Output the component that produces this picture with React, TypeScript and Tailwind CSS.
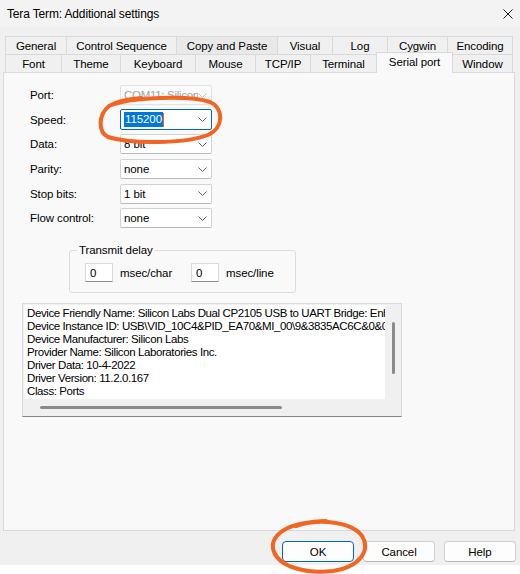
import React from "react";

const tabsRow1: [string, number][] = [
  ["General", 61],
  ["Control Sequence", 110],
  ["Copy and Paste", 101],
  ["Visual", 55],
  ["Log", 55],
  ["Cygwin", 60],
  ["Encoding", 66],
];

const tabsRow2: [string, number][] = [
  ["Font", 56],
  ["Theme", 59],
  ["Keyboard", 75],
  ["Mouse", 60],
  ["TCP/IP", 55],
  ["Terminal", 66],
  ["Serial port", 77],
  ["Window", 60],
];

function Chevron({ color = "#5f5f5f" }: { color?: string }) {
  return (
    <svg width="9" height="5" viewBox="0 0 9 5" className="shrink-0">
      <polyline points="0.5,0.5 4.5,4.5 8.5,0.5" fill="none" stroke={color} strokeWidth="1" />
    </svg>
  );
}

function Select({ value }: { value: string }) {
  return (
    <div className="w-[92px] h-[20px] bg-white border border-[#d3d3d3] border-b-[#b8b8b8] rounded-[2px] flex items-center pl-[3px] pr-[4px]">
      <span className="flex-1 whitespace-nowrap overflow-hidden">{value}</span>
      <Chevron />
    </div>
  );
}

const info = [
  "Device Friendly Name: Silicon Labs Dual CP2105 USB to UART Bridge: Enhanced COM Port (COM11)",
  "Device Instance ID: USB\\VID_10C4&PID_EA70&MI_00\\9&3835AC6C&0&0000",
  "Device Manufacturer: Silicon Labs",
  "Provider Name: Silicon Laboratories Inc.",
  "Driver Data: 10-4-2022",
  "Driver Version: 11.2.0.167",
  "Class: Ports",
];

export default function App() {
  return (
    <div className="relative w-[520px] h-[574px] bg-white overflow-hidden font-['Liberation_Sans',Arial,sans-serif] text-[11.5px] leading-[14px] tracking-[-0.1px] text-black">
      <div className="h-[565px] bg-[#f0f0f0] flex flex-col">
        {/* Title bar */}
        <div className="h-[27px] flex items-center justify-between pl-[7px] pr-[7px] bg-[#f3f3f3]">
          <span className="text-[12px] tracking-[-0.15px]">Tera Term: Additional settings</span>
          <svg width="10" height="10" viewBox="0 0 10 10">
            <line x1="0.5" y1="0.5" x2="9.5" y2="9.5" stroke="#1b1b1b" strokeWidth="1" />
            <line x1="9.5" y1="0.5" x2="0.5" y2="9.5" stroke="#1b1b1b" strokeWidth="1" />
          </svg>
        </div>

        {/* Tabs */}
        <div className="mt-[9px] pl-[5px]">
          <div className="flex h-[18px]">
            {tabsRow1.map(([label, w], i) => (
              <div
                key={label}
                style={{ width: w }}
                className={
                  "h-[18px] flex items-center justify-center border-t border-l border-[#d9d9d9] " +
                  (i === tabsRow1.length - 1 ? "border-r " : "") +
                  (label === "Copy and Paste" ? "bg-[#e9e9e9]" : "bg-[#f0f0f0]")
                }
              >
                {label}
              </div>
            ))}
          </div>
          <div className="flex h-[20px] -mt-[2px] items-end relative z-10">
            {tabsRow2.map(([label, w], i) => {
              const sel = label === "Serial port";
              return (
                <div
                  key={label}
                  style={{ width: w }}
                  className={
                    sel
                      ? "h-[21px] -mb-px flex items-start justify-center pt-[2px] bg-[#f9f9f9] border-t border-l border-r border-[#d9d9d9]"
                      : "h-[18px] flex items-center justify-center bg-[#f0f0f0] border-t border-[#d9d9d9] " +
                        (i === tabsRow2.length - 1 ? "border-r " : "") +
                        (label !== "Window" ? "border-l" : "")
                  }
                >
                  {label}
                </div>
              );
            })}
          </div>
        </div>

        {/* Panel */}
        <div className="ml-[3px] w-[512px] h-[459px] border border-[#d9d9d9] bg-[#f9f9f9] flex flex-col">
          {/* Form rows */}
          <div className="mt-[12px] pl-[26px] flex flex-col gap-[4.7px]">
            <div className="flex items-center h-[20px]">
              <span className="w-[90px]">Port:</span>
              <div className="w-[92px] h-[20px] bg-[#fbfbfb] border border-[#e2e2e2] rounded-[2px] flex items-center pl-[3px] pr-[4px] text-[#a3a3a3]">
                <span className="flex-1 whitespace-nowrap overflow-hidden tracking-[-0.3px]">COM11: Silicon</span>
                <Chevron color="#c4c4c4" />
              </div>
            </div>
            <div className="flex items-center h-[20px]">
              <span className="w-[90px]">Speed:</span>
              <div className="w-[92px] h-[21px] bg-white border border-[#0067c0] rounded-[2px] flex items-center pl-[3px] pr-[4px]">
                <span className="flex-1 flex items-center">
                  <span className="bg-[#0078d7] text-white px-[1px] leading-[15px]">115200</span>
                  <span className="w-[1px] h-[14px] bg-[#f26522]" />
                </span>
                <Chevron />
              </div>
            </div>
            <div className="flex items-center h-[20px]">
              <span className="w-[90px]">Data:</span>
              <Select value="8 bit" />
            </div>
            <div className="flex items-center h-[20px]">
              <span className="w-[90px]">Parity:</span>
              <Select value="none" />
            </div>
            <div className="flex items-center h-[20px]">
              <span className="w-[90px]">Stop bits:</span>
              <Select value="1 bit" />
            </div>
            <div className="flex items-center h-[20px]">
              <span className="w-[90px]">Flow control:</span>
              <Select value="none" />
            </div>
          </div>

          {/* Transmit delay */}
          <fieldset className="ml-[65px] mt-[15px] w-[227px] border border-[#dcdcdc] rounded-[3px] pb-[10px]">
            <legend className="ml-[7px] px-[2px] leading-[14px]">Transmit delay</legend>
            <div className="flex items-center mt-[6px] pl-[15px]">
              <div className="w-[28px] h-[19px] bg-white border border-[#dadada] border-b-[#8d8d8d] pl-[4px] flex items-center">0</div>
              <span className="w-[78px] pl-[7px]">msec/char</span>
              <div className="w-[28px] h-[19px] bg-white border border-[#dadada] border-b-[#8d8d8d] pl-[4px] flex items-center">0</div>
              <span className="pl-[7px]">msec/line</span>
            </div>
          </fieldset>

          {/* Info list */}
          <div className="ml-[18px] mt-[10px] w-[380px] h-[114px] border border-[#dadada] border-b-[#848484] bg-[#f0f0f0] p-[1px] flex flex-col">
            <div className="flex h-[94px]">
              <div className="w-[361px] h-[94px] bg-white overflow-hidden pl-[3px] pt-[2px] tracking-[-0.4px]">
                {info.map((l) => (
                  <div key={l} className="whitespace-nowrap leading-[13px]">
                    {l}
                  </div>
                ))}
              </div>
              <div className="flex-1 flex justify-center pt-[17px]">
                <div className="w-[3px] h-[52px] rounded-full bg-[#8a8a8a] ml-[1px]" />
              </div>
            </div>
            <div className="flex-1 flex items-center pl-[16px]">
              <div className="w-[242px] h-[3px] rounded-full bg-[#8a8a8a]" />
            </div>
          </div>
        </div>

        {/* Buttons */}
        <div className="mt-[10px] flex justify-end gap-[9px] pr-[4px]">
          <button className="w-[72px] h-[21px] bg-[#fdfdfd] border border-[#0067c0] rounded-[4px] flex items-center justify-center">
            OK
          </button>
          <button className="w-[72px] h-[21px] bg-[#fdfdfd] border border-[#d0d0d0] border-b-[#b5b5b5] rounded-[4px] flex items-center justify-center">
            Cancel
          </button>
          <button className="w-[72px] h-[21px] bg-[#fdfdfd] border border-[#d0d0d0] border-b-[#b5b5b5] rounded-[4px] flex items-center justify-center">
            Help
          </button>
        </div>
      </div>

      {/* Orange annotations */}
      <svg className="absolute inset-0 pointer-events-none" width="520" height="574" viewBox="0 0 520 574">
        <path
          d="M 109 106 C 129 97, 190 95, 210 102 C 224 108, 224 128, 208 135 C 184 144, 130 144, 108 137 C 98 132, 98 115, 109 106 C 117 101, 129 99, 141 98"
          fill="none"
          stroke="#f26522"
          strokeWidth="4"
          strokeLinecap="round"
        />
        <path
          d="M 296 526 C 320 518, 352 522, 362 536 C 371 550, 360 567, 333 571 C 306 574, 280 567, 274 552 C 269 539, 281 528, 300 524 C 310 522, 318 521, 326 521"
          fill="none"
          stroke="#f26522"
          strokeWidth="4"
          strokeLinecap="round"
        />
      </svg>
    </div>
  );
}
